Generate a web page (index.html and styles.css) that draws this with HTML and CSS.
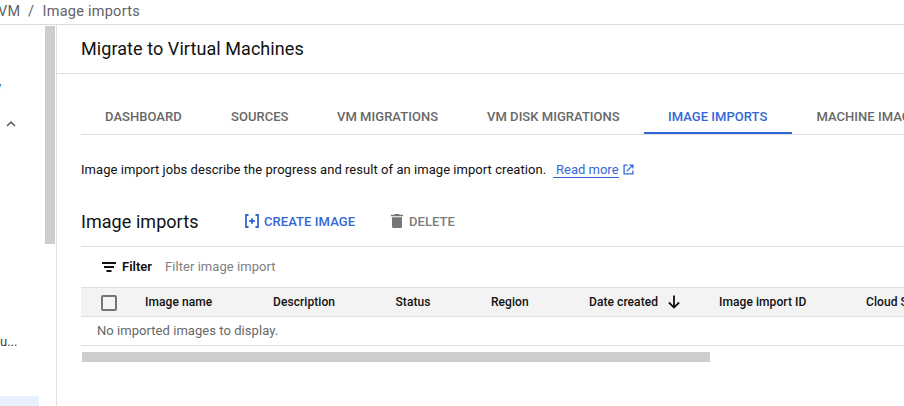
FILE: index.html
```html
<!DOCTYPE html>
<html lang="en">
<head>
<meta charset="utf-8">
<title>Migrate to Virtual Machines</title>
<link rel="stylesheet" href="styles.css">
</head>
<body>
<header class="crumbs"><span>VM</span><span class="slash">/</span><span>Image imports</span></header>
<div class="shell">
  <aside class="sidebar">
    <div class="nav">
      <span class="nav-text nav-cut">y</span>
      <svg class="chevron" viewBox="0 0 10 6"><path d="M1 5 5 1.2 9 5"/></svg>
      <span class="nav-text nav-more">u...</span>
      <span class="nav-selected"></span>
    </div>
    <div class="scrollbar"></div>
  </aside>
  <main class="main">
    <h1 class="title"><span>Migrate to Virtual Machines</span></h1>
    <div class="content">
      <nav class="tabs">
        <a class="tab t1">DASHBOARD</a><a class="tab t2">SOURCES</a><a class="tab t3">VM MIGRATIONS</a><a class="tab t4">VM DISK MIGRATIONS</a><a class="tab t5 active">IMAGE IMPORTS</a><a class="tab t6">MACHINE IMAGE IMPORTS</a>
      </nav>
      <p class="intro"><span class="intro-text">Image import jobs describe the progress and result of an image import creation.</span><a class="link">Read more</a><svg class="external" viewBox="0 0 12 12"><path d="M5 1.2H1.2v9.6h9.6V7M7 1.2h3.8V5M10.6 1.4 4 8"/></svg></p>
      <div class="toolbar">
        <h2 class="subtitle">Image imports</h2>
        <svg class="create-icon" viewBox="0 0 16 14"><path d="M4.500 1H2v12h2.500M11.500 1H14v12h-2.500M8 4.200v5.600M5.200 7h5.600"/></svg>
        <span class="create">CREATE IMAGE</span>
        <svg class="trash" viewBox="0 0 12 14"><path d="M0 .8h3.300L4 0h4l.7.8H12v1.500H0zM1 3.200h10v9.300c0 .8-.7 1.500-1.500 1.500h-7C1.700 14 1 13.300 1 12.500z"/></svg>
        <span class="delete">DELETE</span>
      </div>
      <div class="filter">
        <svg class="filter-icon" viewBox="0 0 14 10"><path d="M0 0h14v2H0zM2 4h10v2H2zM4.500 8h5v2h-5z"/></svg>
        <b class="filter-label">Filter</b><span class="filter-hint">Filter image import</span>
      </div>
      <div class="thead">
        <span class="checkbox"></span>
        <span>Image name</span><span>Description</span><span>Status</span><span>Region</span>
        <span class="sorted"><span class="sorted-label">Date created</span><svg class="arrow" viewBox="0 0 12 14"><path d="M6 .5v12M.9 7.500 6 12.600l5.100-5.100"/></svg></span>
        <span>Image import ID</span><span>Cloud Storage</span>
      </div>
      <div class="empty"><span>No imported images to display.</span></div>
      <div class="hscroll"></div>
    </div>
  </main>
</div>
</body>
</html>
```
FILE: styles.css
```css
* { box-sizing: border-box; }
body { margin: 0; width: 904px; height: 406px; overflow: hidden; background: #fff; color: #111; font-family: Roboto, sans-serif; font-size: 13px; }
svg { display: block; flex: none; }
span, a, b, h2 { white-space: nowrap; }
.crumbs { height: 25px; display: flex; border-bottom: 1px solid #dadce0; color: #5f6368; font-size: 14.5px; line-height: 24px; letter-spacing: .25px; overflow: hidden; }
.crumbs span:first-child { width: 30px; margin-left: -2px; }
.crumbs .slash { width: 14.5px; }
.shell { display: flex; height: 381px; }
.sidebar { width: 57px; display: flex; border-right: 1px solid #e0e0e0; flex: none; }
.nav { width: 45px; display: flex; flex-direction: column; overflow: hidden; }
.nav-text { color: #3c4043; line-height: 16px; }
.nav-cut { margin: 54px 0 0 -5px; }
.chevron { width: 10px; height: 6px; margin: 26px 0 0 6px; fill: none; stroke: #5f6368; stroke-width: 1.7; }
.nav-more { margin-top: 207px; }
.nav-selected { width: 39px; margin-top: 46px; flex: 1; background: #e8f0fe; }
.scrollbar { width: 10px; height: 218px; margin-top: 1px; background: #cdcdcd; }
.main { flex: 1; min-width: 0; }
.title { height: 49px; margin: 0; padding-left: 24px; border-bottom: 1px solid #e0e0e0; font-size: 18px; font-weight: 400; line-height: 48px; letter-spacing: .07px; }
.content { margin-left: 24px; overflow: hidden; }
.tabs { height: 61px; display: flex; border-bottom: 1px solid #e0e0e0; padding-top: 24px; font-weight: 500; color: #686868; letter-spacing: .04px; }
.tab { height: 36px; line-height: 37px; padding-left: 24px; flex: none; }
.t1 { width: 126px; } .t2 { width: 106px; } .t3 { width: 150px; } .t4 { width: 181px; } .t5 { width: 148.4px; }
.active { color: #3367d6; border-bottom: 2px solid #3367d6; }
.intro { display: flex; align-items: flex-start; margin: 0; padding-top: 27px; height: 67px; line-height: 16px; }
.intro-text { width: 472px; letter-spacing: .05px; }
.link { width: 66px; padding-left: 3px; height: 16px; color: #3367d6; border-bottom: 1px solid #3367d6; }
.external { width: 11px; height: 11px; margin: 2px 0 0 4px; fill: none; stroke: #3367d6; stroke-width: 1.4; }
.toolbar { height: 45px; display: flex; align-items: center; border-bottom: 1px solid #e0e0e0; padding-bottom: 6px; font-weight: 500; letter-spacing: .07px; }
.subtitle { width: 163px; margin: 0; font-size: 18px; font-weight: 400; letter-spacing: .05px; }
.create-icon { width: 16px; height: 14px; fill: none; stroke: #3367d6; stroke-width: 1.8; }
.create { width: 127px; padding-left: 4px; color: #3367d6; }
.trash { width: 12px; height: 14px; margin-left: 4px; fill: #757575; }
.delete { padding-left: 6px; color: #7d7d7d; }
.filter { height: 40px; display: flex; align-items: center; padding: 0 0 2px 21px; }
.filter-icon { width: 14px; height: 10px; margin-top: 2px; fill: #111; }
.filter-label { width: 49px; padding-left: 6px; font-weight: 600; }
.filter-hint { color: #808080; letter-spacing: .05px; }
.thead { height: 30px; display: grid; grid-template-columns: 44px 128px 122.500px 95.500px 98px 130px 147px 120px; padding-left: 20px; align-items: center; background: #f3f3f3; border: solid #e0e0e0; border-width: 1px 0; font-size: 12px; font-weight: 500; letter-spacing: .07px; }
.checkbox { width: 16px; height: 16px; border: 2px solid #757575; border-radius: 2px; margin-top: 2px; }
.sorted { display: flex; align-items: center; }
.sorted-label { width: 79px; }
.arrow { width: 12px; height: 14px; fill: none; stroke: #111; stroke-width: 1.8; }
.empty { height: 29px; padding-left: 16px; border-bottom: 1px solid #e0e0e0; line-height: 28px; color: #686868; letter-spacing: .05px; }
.hscroll { width: 628px; height: 10px; margin: 6px 0 0 1px; background: #cdcdcd; }
```
